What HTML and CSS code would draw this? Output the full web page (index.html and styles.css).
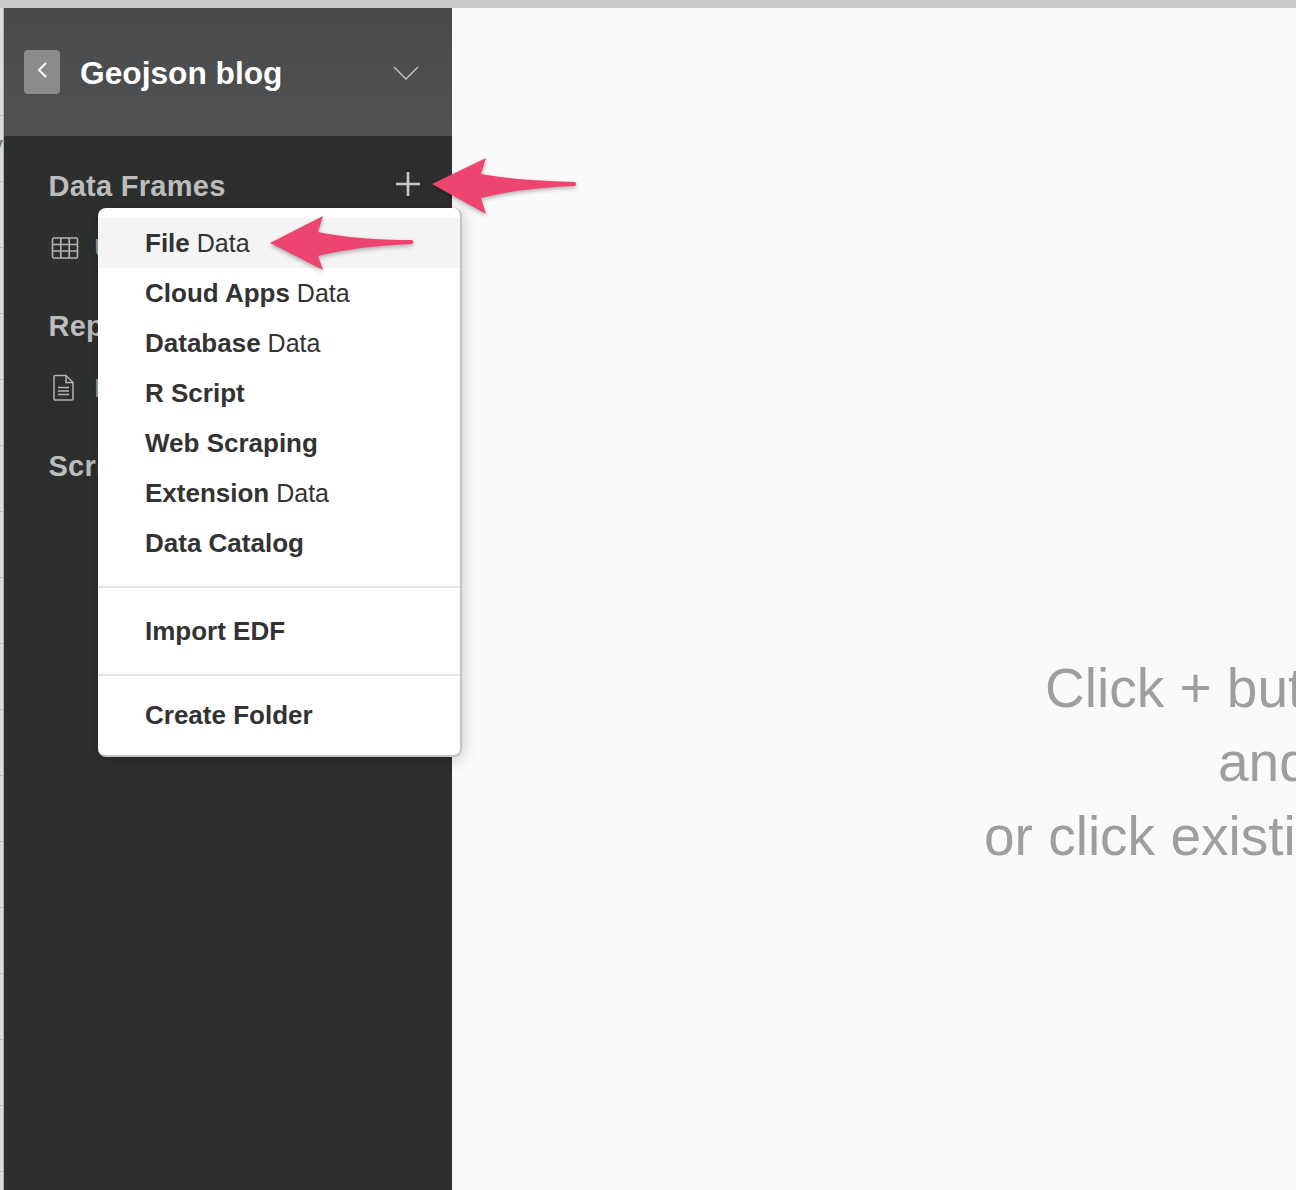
FILE: index.html
```html
<!DOCTYPE html>
<html lang="en">
<head>
<meta charset="utf-8">
<title>Geojson blog</title>
<link rel="stylesheet" href="styles.css">
</head>
<body>
<div class="topbar"></div>
<div class="app">
  <div class="strip"><span class="strip-text">y</span></div>
  <aside class="sidebar">
    <header class="project">
      <div class="back">
        <svg width="12" height="16" viewBox="0 0 12 16"><path d="M10 1 L3 8 L10 15" fill="none" stroke="#fff" stroke-width="2"/></svg>
      </div>
      <div class="project-name">Geojson blog</div>
      <svg class="chevron" width="26" height="15" viewBox="0 0 26 15"><path d="M1 1 L13 13 L25 1" fill="none" stroke="#c4c5c6" stroke-width="1.4"/></svg>
    </header>
    <section class="group group-first">
      <div class="group-head">
        <span class="group-title">Data Frames</span>
        <svg class="plus" width="26" height="26" viewBox="0 0 26 26"><path d="M13 1 V25 M1 13 H25" fill="none" stroke="#c8c8c8" stroke-width="2.6"/></svg>
      </div>
      <div class="row">
        <svg class="row-icon" width="28" height="24" viewBox="0 0 28 24"><g fill="none" stroke="#b4b4b4" stroke-width="1.6"><rect x="1.5" y="2" width="25" height="20" rx="1.5"/><path d="M1.5 8.5 H26.5 M1.5 15 H26.5 M9.8 2 V22 M18.2 2 V22"/></g></svg>
        <span class="row-label">US</span>
      </div>
    </section>
    <section class="group">
      <div class="group-head"><span class="group-title">Reports</span></div>
      <div class="row row-doc">
        <svg class="row-icon" width="28" height="28" viewBox="0 0 28 28"><g fill="none" stroke="#b4b4b4" stroke-width="1.5"><path d="M5 2.5 Q5 1.5 6 1.5 H17 L24 8.5 V25 Q24 26 23 26 H6 Q5 26 5 25 Z"/><path d="M17 1.5 V8.5 H24"/><path d="M9 13.500 H20 M9 17 H20 M9 20.500 H20" stroke-width="1.500"/></g></svg>
        <span class="row-label">Report</span>
      </div>
    </section>
    <section class="group">
      <div class="group-head"><span class="group-title">Scripts</span></div>
    </section>
  </aside>
  <main class="main">
    <p class="hint hint-a">Click + button to import data</p>
    <p class="hint hint-b">and create a data frame</p>
    <p class="hint hint-c">or click existing data frame to open</p>
  </main>
</div>

<nav class="menu">
  <ul class="menu-list">
    <li class="menu-item active"><b>File</b> Data</li>
    <li class="menu-item"><b>Cloud Apps</b> Data</li>
    <li class="menu-item"><b>Database</b> Data</li>
    <li class="menu-item"><b>R Script</b></li>
    <li class="menu-item"><b>Web Scraping</b></li>
    <li class="menu-item"><b>Extension</b> Data</li>
    <li class="menu-item"><b>Data Catalog</b></li>
  </ul>
  <div class="menu-block menu-edf"><b>Import EDF</b></div>
  <div class="menu-block menu-folder"><b>Create Folder</b></div>
</nav>

<svg class="arrow arrow-plus" width="152" height="64" viewBox="0 0 152 64"><path d="M2 28 L56 2 L51 18 Q90 25 145 26 Q147.500 28 145 30 Q90 32 51 42 L56 58 Z" fill="#ee4570"/></svg>
<svg class="arrow arrow-file" width="152" height="64" viewBox="0 0 152 64"><path d="M2 29 L55 2 L50 18 Q90 26 144 26 Q147 28 144 30 Q90 32 50 42 L55 56 Z" fill="#ee4570"/></svg>
</body>
</html>
```
FILE: styles.css
```css
* { box-sizing: border-box; }
html, body { margin: 0; padding: 0; height: 1190px; overflow: hidden; }
body { font-family: "Liberation Sans", Arial, sans-serif; background: #fafafa; position: relative; }

.topbar { height: 8px; background: #c9c9c9; }
.app { display: flex; height: 1182px; }
.strip {
  width: 4px; flex: none; background-color: #dcdcdc; overflow: hidden; padding-top: 122px;
  background-image: repeating-linear-gradient(to bottom, #dcdcdc 0, #dcdcdc 65px, #bdbdbd 65px, #bdbdbd 66px);
  background-position: 0 42px;
  border-right: 1px solid #b0b0b0;
}
.strip-text { display: block; margin-left: -10px; font-size: 26px; color: #777; }
.sidebar { width: 448px; flex: none; background: #2d2f2e; }
.project {
  height: 128px; display: flex; align-items: center; padding: 2px 33px 0 20px;
  background: linear-gradient(to bottom, #484a4c, #505153);
}
.back {
  width: 36px; height: 44px; border-radius: 4px; background: #8b8b8b; margin-bottom: 2px;
  display: flex; align-items: flex-start; justify-content: center; padding-top: 12px;
}
.project-name { flex: 1; margin-left: 20px; color: #fff; font-size: 31.7px; font-weight: 700; }
.chevron { flex: none; }

.group { padding: 0 31px 0 44.5px; height: 140px; }
.group-first { padding-top: 28px; height: 168px; }
.group-head { height: 44px; display: flex; align-items: center; justify-content: space-between; }
.group-title { color: #bdbdbd; font-size: 29px; font-weight: 700; letter-spacing: .27px; }
.plus { margin-bottom: 4px; }
.row { display: flex; align-items: center; height: 44px; margin-top: 18px; margin-left: 2.5px; }
.row-doc { margin-top: 18px; margin-left: .5px; }
.row-doc .row-label { margin-left: 17px; }
.row-icon { flex: none; }
.row-label { margin-left: 15px; color: #a0a0a0; font-size: 26px; }

.main { flex: 1; min-width: 0; overflow: hidden; padding-top: 643px; }
.hint { margin: 0; height: 74px; line-height: 74px; font-size: 55px; color: #9e9e9e; white-space: nowrap; font-weight: 400; }
.hint-a { padding-left: 593px; }
.hint-b { padding-left: 766px; }
.hint-c { padding-left: 532px; }

.menu {
  position: absolute; left: 98px; top: 208px; width: 364px; height: 549px;
  background: #fff; border-radius: 8px; padding-top: 10px;
  border-right: 2px solid #c4c4c4; border-bottom: 2px solid #c4c4c4;
  box-shadow: 0 2px 16px rgba(0, 0, 0, .22);
  font-size: 25px; color: #333;
}
.menu b { font-size: 26px; }
.menu-list { list-style: none; margin: 0; padding: 0 0 18px; border-bottom: 2px solid #e6e6e6; }
.menu-item { height: 50px; line-height: 50px; padding-left: 47px; }
.menu-item.active { background: #f4f4f4; }
.menu-block { padding-left: 47px; border-bottom: 2px solid #e6e6e6; }
.menu-edf { height: 88px; line-height: 86px; }
.menu-folder { border-bottom: 0; line-height: 78px; }

.arrow { position: absolute; filter: drop-shadow(0 2px 2px rgba(0, 0, 0, .3)); }
.arrow-plus { left: 430px; top: 156px; }
.arrow-file { left: 268px; top: 214px; }
```
